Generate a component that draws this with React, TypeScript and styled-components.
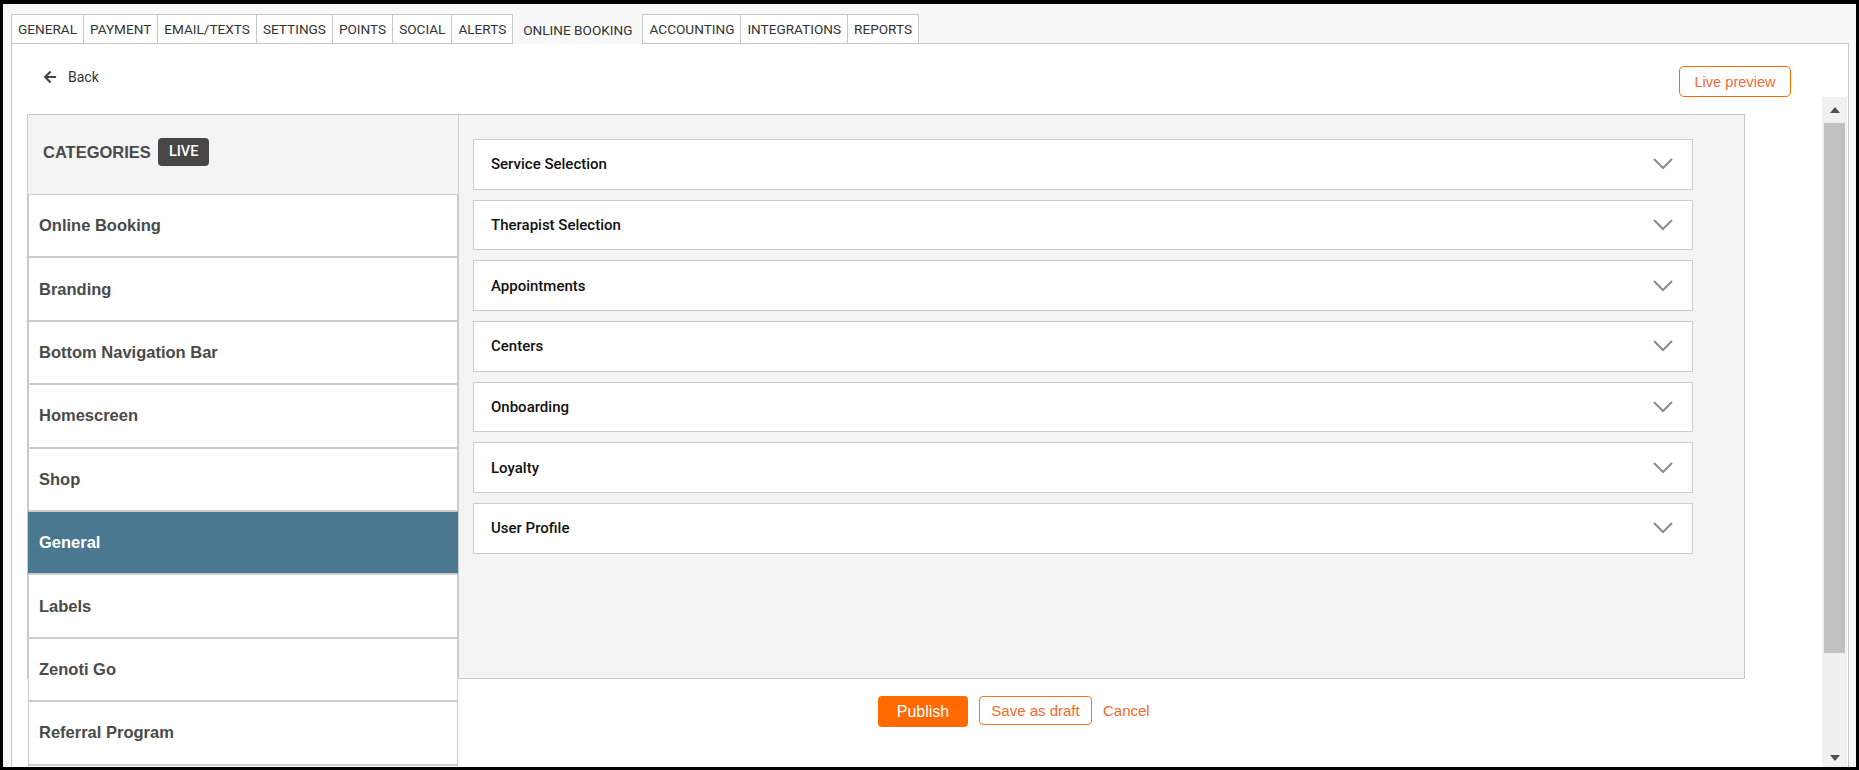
import React from 'react';
import styled, {createGlobalStyle} from 'styled-components';
import {FaArrowLeft} from 'react-icons/fa';

const TABS = ['GENERAL', 'PAYMENT', 'EMAIL/TEXTS', 'SETTINGS', 'POINTS', 'SOCIAL', 'ALERTS', 'ONLINE BOOKING', 'ACCOUNTING', 'INTEGRATIONS', 'REPORTS'];
const ACTIVE_TAB = 'ONLINE BOOKING';

// last entry is only visible as a border at the bottom edge
const CATEGORIES = ['Online Booking', 'Branding', 'Bottom Navigation Bar', 'Homescreen', 'Shop', 'General', 'Labels', 'Zenoti Go', 'Referral Program', ''];
const SELECTED_CATEGORY = 'General';

const SECTIONS = ['Service Selection', 'Therapist Selection', 'Appointments', 'Centers', 'Onboarding', 'Loyalty', 'User Profile'];

const Chevron = () => (
    <svg width="20" height="12" viewBox="0 0 20 12">
        <polyline points="1,1 10,10 19,1" fill="none" stroke="#8c8c8c" strokeWidth="2"/>
    </svg>
);

export default function App() {
    return (
        <>
            <GlobalStyle/>
            <Frame>
                <TabBar>
                    {TABS.map(tab => (
                        <Tab key={tab} $active={tab === ACTIVE_TAB}>{tab}</Tab>
                    ))}
                </TabBar>
                <PagePanel>
                    <TopRow>
                        <BackLink>
                            <FaArrowLeft size={14} color="#444"/>
                            Back
                        </BackLink>
                        <LivePreviewButton>Live preview</LivePreviewButton>
                    </TopRow>
                    <ScrollArea>
                        <ScrollContent>
                            <Panel>
                                <Sidebar>
                                    <SidebarHeader>
                                        <HeaderTitle>CATEGORIES</HeaderTitle>
                                        <LiveBadge>LIVE</LiveBadge>
                                    </SidebarHeader>
                                    {CATEGORIES.map((cat, i) => (
                                        <CategoryItem key={i} $selected={cat === SELECTED_CATEGORY}>{cat}</CategoryItem>
                                    ))}
                                </Sidebar>
                                <ContentArea>
                                    {SECTIONS.map(section => (
                                        <SectionRow key={section}>
                                            <SectionTitle>{section}</SectionTitle>
                                            <Chevron/>
                                        </SectionRow>
                                    ))}
                                </ContentArea>
                            </Panel>
                            <Actions>
                                <PublishButton>Publish</PublishButton>
                                <DraftButton>Save as draft</DraftButton>
                                <CancelLink>Cancel</CancelLink>
                            </Actions>
                        </ScrollContent>
                        <ScrollBar>
                            <ScrollButton>
                                <ScrollArrow $dir="up"/>
                            </ScrollButton>
                            <ScrollTrack>
                                <ScrollThumb/>
                            </ScrollTrack>
                            <ScrollButton $bottom>
                                <ScrollArrow $dir="down"/>
                            </ScrollButton>
                        </ScrollBar>
                    </ScrollArea>
                </PagePanel>
            </Frame>
        </>
    );
}

const GlobalStyle = createGlobalStyle`
  html, body {
    margin: 0;
    padding: 0;
  }

  body {
    font-family: Roboto, "Liberation Sans", Arial, sans-serif;
    background: #fff;
  }

  * {
    box-sizing: border-box;
  }
`;

const Frame = styled.div`
  width: 1859px;
  height: 770px;
  border-style: solid;
  border-color: #000;
  border-width: 4px 3px 3px 3px;
  background: #f8f8f8;
  padding: 10px 7px 0 8px;
  display: flex;
  flex-direction: column;
  overflow: hidden;
`;

const TabBar = styled.div`
  display: flex;
  height: 29px;
  flex-shrink: 0;
`;

const Tab = styled.div<{ $active?: boolean }>`
  height: ${p => (p.$active ? '30px' : '29px')};
  display: flex;
  align-items: center;
  padding: 0 ${p => (p.$active ? '10px' : '6px')};
  border: 1px solid ${p => (p.$active ? 'transparent' : '#c8c8c8')};
  border-bottom: none;
  margin-left: -1px;
  background: ${p => (p.$active ? '#f8f8f8' : '#fff')};
  background-clip: padding-box;
  font-family: Roboto, sans-serif;
  font-size: 13.6px;
  color: #333;
  white-space: nowrap;
  position: relative;
  z-index: ${p => (p.$active ? 1 : 0)};

  &:first-child {
    margin-left: 0;
  }
`;

const PagePanel = styled.div`
  flex: 1;
  min-height: 0;
  background: #fff;
  border: 1px solid #c8c8c8;
  border-bottom: none;
  display: flex;
  flex-direction: column;
`;

const TopRow = styled.div`
  height: 53px;
  flex-shrink: 0;
  display: flex;
  justify-content: space-between;
  align-items: flex-start;
  padding: 0 57px 0 31px;
`;

const BackLink = styled.a`
  margin-top: 25px;
  height: 16px;
  display: flex;
  align-items: center;
  gap: 11px;
  font-family: Roboto, sans-serif;
  font-size: 14px;
  color: #333;
  cursor: pointer;
`;

const LivePreviewButton = styled.button`
  margin-top: 22px;
  width: 112px;
  height: 31px;
  border: 1px solid #ff6a00;
  border-radius: 5px;
  background: #fff;
  color: #f26b3a;
  font-family: "Liberation Sans", Arial, sans-serif;
  font-size: 14.6px;
  padding: 0;
  cursor: pointer;
`;

const ScrollArea = styled.div`
  flex: 1;
  min-height: 0;
  display: flex;
`;

const ScrollContent = styled.div`
  flex: 1;
  min-width: 0;
  overflow: hidden;
  padding: 17px 0 0 15px;
`;

const Panel = styled.div`
  width: 1718px;
  height: 565px;
  border: 1px solid #c8c8c8;
  background: #f4f4f4;
  display: flex;
`;

const Sidebar = styled.div`
  width: 430px;
  flex-shrink: 0;
`;

const SidebarHeader = styled.div`
  height: 79px;
  display: flex;
  align-items: flex-start;
  gap: 7px;
  padding: 23px 0 0 15px;
`;

const HeaderTitle = styled.span`
  line-height: 28px;
  font-family: "Liberation Sans", Arial, sans-serif;
  font-weight: bold;
  font-size: 16.5px;
  color: #4a4a4a;
`;

const LiveBadge = styled.span`
  height: 28px;
  line-height: 28px;
  padding: 0 11px;
  background: #474747;
  border-radius: 4px;
  color: #fff;
  font-family: Roboto, sans-serif;
  font-weight: 500;
  font-size: 14.5px;
`;

const CategoryItem = styled.div<{ $selected?: boolean }>`
  height: 63.4px;
  display: flex;
  align-items: center;
  padding-left: 10px;
  border: 1px solid #ccc;
  border-left-color: ${p => (p.$selected ? '#4a7891' : '#ccc')};
  border-right-color: ${p => (p.$selected ? '#4a7891' : '#ccc')};
  background: ${p => (p.$selected ? '#4a7891' : '#fff')};
  color: ${p => (p.$selected ? '#fff' : '#4a4a4a')};
  font-family: "Liberation Sans", Arial, sans-serif;
  font-weight: bold;
  font-size: 16.5px;
  position: relative;
`;

const ContentArea = styled.div`
  flex: 1;
  border-left: 1px solid #ccc;
  padding: 24px 0 0 14px;
`;

const SectionRow = styled.div`
  width: 1220px;
  height: 50.5px;
  margin-bottom: 10.2px;
  border: 1px solid #ccc;
  background: #fff;
  display: flex;
  align-items: center;
  justify-content: space-between;
  padding: 0 19px 0 17px;
`;

const SectionTitle = styled.span`
  font-family: Roboto, sans-serif;
  font-weight: 500;
  font-size: 15px;
  color: #111;
`;

const Actions = styled.div`
  display: flex;
  align-items: flex-start;
  gap: 11px;
  margin: 17px 0 0 851px;
`;

const PublishButton = styled.button`
  width: 90px;
  height: 31px;
  border: none;
  border-radius: 4px;
  background: #ff6a00;
  color: #fff;
  font-family: "Liberation Sans", Arial, sans-serif;
  font-size: 16px;
  padding: 0;
`;

const DraftButton = styled.button`
  width: 113px;
  height: 29px;
  border: 1px solid #f7761f;
  border-radius: 4px;
  background: #fff;
  color: #f26a2c;
  font-family: "Liberation Sans", Arial, sans-serif;
  font-size: 15px;
  padding: 0;
`;

const CancelLink = styled.a`
  line-height: 29px;
  color: #f26a2c;
  font-family: "Liberation Sans", Arial, sans-serif;
  font-size: 15px;
`;

const ScrollBar = styled.div`
  width: 25px;
  margin-right: 1px;
  flex-shrink: 0;
  background: #f0f0f0;
  display: flex;
  flex-direction: column;
`;

const ScrollButton = styled.div<{ $bottom?: boolean }>`
  height: 25px;
  flex-shrink: 0;
  display: flex;
  justify-content: center;
  align-items: ${p => (p.$bottom ? 'flex-end' : 'center')};
  padding-bottom: ${p => (p.$bottom ? '6px' : '0')};
`;

const ScrollArrow = styled.span<{ $dir: 'up' | 'down' }>`
  width: 0;
  height: 0;
  border-left: 5px solid transparent;
  border-right: 5px solid transparent;
  ${p => (p.$dir === 'up' ? 'border-bottom: 6px solid #505050;' : 'border-top: 6px solid #505050;')}
`;

const ScrollTrack = styled.div`
  flex: 1;
  padding: 1px 2px 0;
`;

const ScrollThumb = styled.div`
  height: 530px;
  background: #c1c1c1;
`;
